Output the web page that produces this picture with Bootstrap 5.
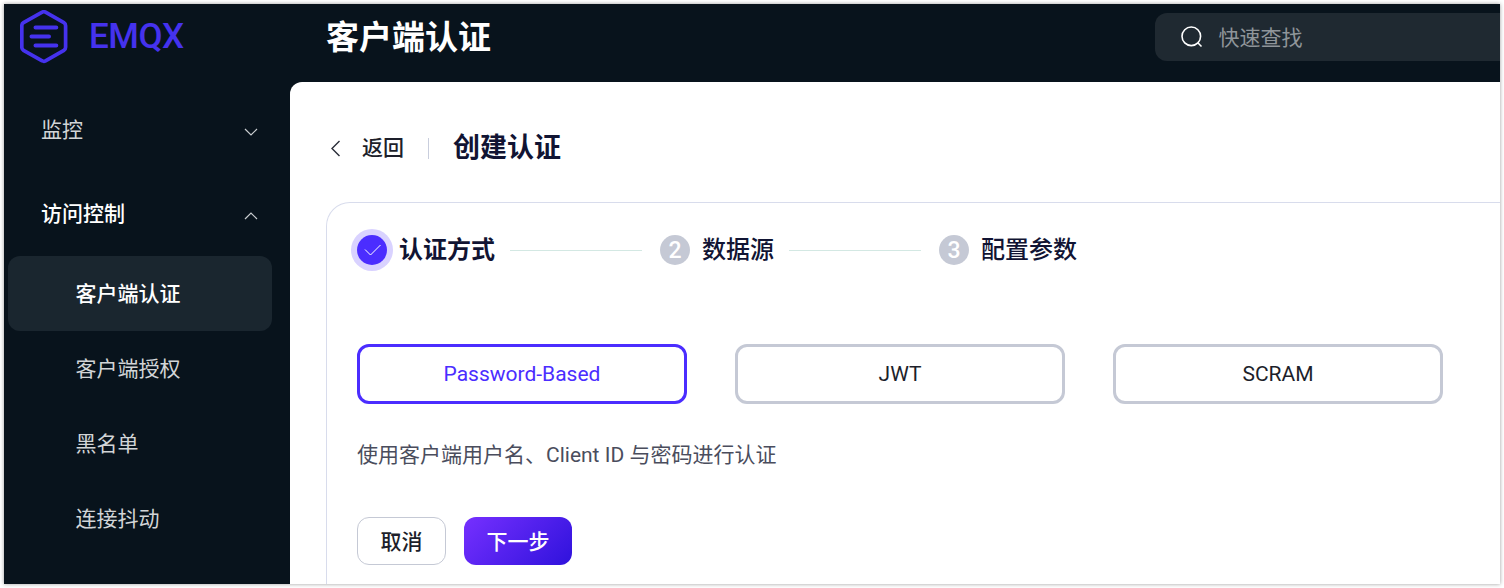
<!DOCTYPE html>
<html lang="zh-CN">
<head>
<meta charset="utf-8">
<title>EMQX Dashboard</title>
<link href="https://cdn.jsdelivr.net/npm/bootstrap@5.3.0/dist/css/bootstrap.min.css" rel="stylesheet">
<style>
  body { height: 588px; padding: 4px; background: #fff; color: #1d1f2b; font-family: Roboto, "Noto Sans CJK SC", sans-serif; font-size: 21px; line-height: 30px; overflow: hidden; }
  .app-window { height: 580px; background: #08131c; box-shadow: 0 0 4px rgba(0,0,0,.4); }
  .app-side { width: 286px; }
  .app-brand { height: 78px; padding-left: 16px; }
  .brand-mark { margin-top: 6px; }
  .brand-name { font-size: 35px; font-weight: 500; color: #4532ee; line-height: 40px; margin: 13px 0 0 21px; letter-spacing: -.5px; }
  .side-group { height: 84px; padding: 0 15px 0 37px; color: #d2d5d7; }
  .app-brand + .side-group { margin-top: 6px; }
  .side-group.open { color: #fff; font-weight: 500; }
  .side-link { height: 75px; margin: 0 18px 0 4px; padding-left: 67.5px; border-radius: 12px; color: #d2d5d7; }
  .side-link.active { background: #1a262f; color: #fff; font-weight: 500; }
  .app-header { height: 78px; padding-left: 36px; }
  .app-title { font-size: 33px; font-weight: 700; color: #fff; line-height: 40px; margin-top: 14px; }
  .quick-search { width: 345px; height: 48px; margin-top: 9px; padding-left: 26px; background: #1f2931; border-radius: 12px 0 0 12px; color: #8f959a; }
  .quick-search span { margin: 1px 0 0 15.5px; }
  .app-page { background: #fff; border-top-left-radius: 12px; padding: 46px 0 0 36px; }
  .page-bar { height: 40px; }
  .back-icon { margin: -2px 16px 0 0; }
  .back-text { font-weight: 500; }
  .bar-rule { width: 1px; height: 21px; background: #c9cedd; margin: 0 24px 0 24px; }
  .page-name { font-size: 27px; font-weight: 700; color: #111433; line-height: 40px; }
  .auth-panel { margin-top: 34px; border: 1px solid #d8dcec; border-width: 1px 0 0 1px; border-top-left-radius: 24px; padding: 26px 57px 0 30px; height: 382px; }
  .step-row { height: 42px; font-size: 24px; color: #111433; }
  .step-dot { width: 30px; height: 30px; border-radius: 50%; background: #c5c9d5; color: #fff; font-weight: 500; font-size: 23px; line-height: 31px; }
  .step-dot.current { background: #4b2dff; box-shadow: 0 0 0 6px #d9d2ff; }
  .step-text { margin: 0 15px 0 12px; font-weight: 500; }
  b.step-text { font-weight: 700; }
  .step-line { width: 132px; height: 1px; background: #d3e8e3; margin-right: 18px; }
  .type-row { margin-top: 73px; gap: 48px; }
  .type-box { width: 330px; height: 60px; border: 3px solid #c5c9d5; border-radius: 12px; }
  .type-box.chosen { border-color: #4b2dff; color: #4b2dff; }
  .type-note { margin-top: 36px; color: #4a4d5d; }
  .actions { gap: 18px; margin-top: 47px; }
  .act { height: 48px; border-radius: 12px; font-size: 21px; font-weight: 500; padding: 3px 0 0; }
  .act-cancel { width: 89px; border: 1px solid #c5c9d5; color: #1d1f2b; }
  .act-next { width: 108px; border: 0; color: #fff; background: linear-gradient(135deg, #7630ff 0%, #2f12dc 100%); }
</style>
</head>
<body>
<div class="app-window d-flex">
  <nav class="app-side flex-shrink-0">
    <div class="app-brand d-flex">
      <svg class="brand-mark flex-shrink-0" width="48" height="54" viewBox="0 0 48 54" fill="none" stroke="#4532ee">
        <path d="M22.2 2.2Q23.800 1.200 25.500 2.2L43.900 12.7Q45.600 13.7 45.600 15.7V37.300Q45.600 39.300 43.900 40.300L25.500 50.800Q23.800 51.800 22.2 50.800L3.5 40.300Q1.8 39.300 1.8 37.300V15.7Q1.8 13.7 3.5 12.7Z" stroke-width="3.700" stroke-linejoin="round"/>
        <path d="M15.500 17.400H36.300M11.500 26.500H29M15.500 35.600H36.300" stroke-width="4" stroke-linecap="round"/>
      </svg>
      <span class="brand-name">EMQX</span>
    </div>
    <div class="side-group d-flex align-items-center justify-content-between">
      <span>监控</span>
      <svg width="16" height="10" viewBox="0 0 16 10" fill="none" stroke="#c9cdd0" stroke-width="1.2" class="mt-1 me-3"><path d="M2 2L8 8L14 2"/></svg>
    </div>
    <div class="side-group open d-flex align-items-center justify-content-between">
      <span>访问控制</span>
      <svg width="16" height="10" viewBox="0 0 16 10" fill="none" stroke="#c9cdd0" stroke-width="1.2" class="mt-1 me-3"><path d="M2 8L8 2L14 8"/></svg>
    </div>
    <div class="side-link active d-flex align-items-center">客户端认证</div>
    <div class="side-link d-flex align-items-center">客户端授权</div>
    <div class="side-link d-flex align-items-center">黑名单</div>
    <div class="side-link d-flex align-items-center">连接抖动</div>
  </nav>
  <div class="flex-grow-1 d-flex flex-column">
    <header class="app-header d-flex justify-content-between align-items-start">
      <div class="app-title">客户端认证</div>
      <div class="quick-search d-flex align-items-center">
        <svg width="22" height="22" viewBox="0 0 22 22" fill="none" stroke="#fff" stroke-width="1.6"><circle cx="10.300" cy="10.300" r="9.300"/><path d="M16.800 16.800L20.500 20.500"/></svg>
        <span>快速查找</span>
      </div>
    </header>
    <main class="app-page flex-grow-1">
      <div class="page-bar d-flex align-items-center">
        <svg class="back-icon" width="20" height="20" viewBox="0 0 20 20" fill="none" stroke="#2a2d38" stroke-width="1.4"><path d="M13.500 4L6 11.500L13.500 19"/></svg>
        <span class="back-text">返回</span>
        <div class="bar-rule"></div>
        <span class="page-name">创建认证</span>
      </div>
      <section class="auth-panel">
        <div class="step-row d-flex align-items-center">
          <span class="step-dot current d-flex align-items-center justify-content-center">
            <svg width="18" height="14" viewBox="0 0 18 14" fill="none" stroke="#fff" stroke-width="1"><path d="M2 6.500L7.500 12L17.500 2"/></svg>
          </span>
          <b class="step-text">认证方式</b>
          <div class="step-line"></div>
          <span class="step-dot text-center">2</span>
          <span class="step-text">数据源</span>
          <div class="step-line"></div>
          <span class="step-dot text-center">3</span>
          <span class="step-text">配置参数</span>
        </div>
        <div class="type-row d-flex">
          <div class="type-box chosen d-flex align-items-center justify-content-center">Password-Based</div>
          <div class="type-box d-flex align-items-center justify-content-center">JWT</div>
          <div class="type-box d-flex align-items-center justify-content-center">SCRAM</div>
        </div>
        <div class="type-note">使用客户端用户名、Client ID 与密码进行认证</div>
        <div class="actions d-flex">
          <button class="btn act act-cancel">取消</button>
          <button class="btn act act-next">下一步</button>
        </div>
      </section>
    </main>
  </div>
</div>
<script src="https://cdn.jsdelivr.net/npm/bootstrap@5.3.0/dist/js/bootstrap.bundle.min.js"></script>
</body>
</html>
